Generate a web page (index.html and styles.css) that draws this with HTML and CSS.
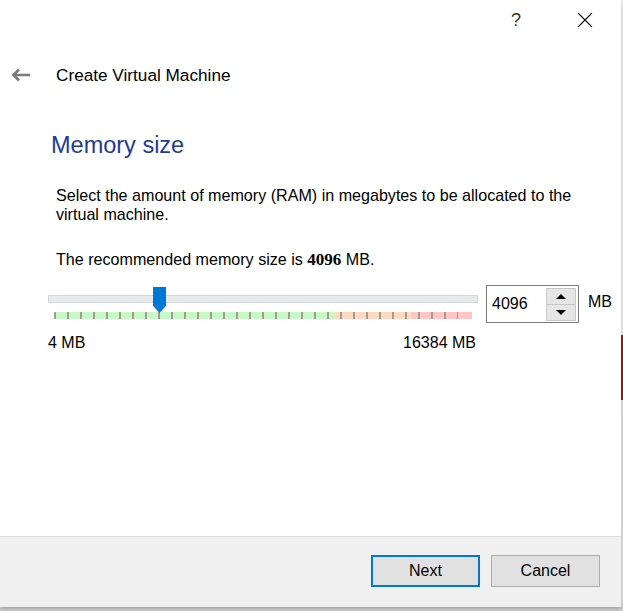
FILE: index.html
```html
<!DOCTYPE html>
<html lang="en">
<head>
    <meta charset="UTF-8">
    <title>Create Virtual Machine</title>
    <link rel="stylesheet" href="styles.css">
</head>
<body>
    <div class="window">
        <div class="titlebar">
            <span class="help">?</span>
            <span class="close">
                <svg width="16" height="16" viewBox="0 0 16 16"><path d="M1 1 L15 15 M15 1 L1 15" stroke="#111" stroke-width="1.1" fill="none"/></svg>
            </span>
        </div>

        <div class="header">
            <svg class="back" width="20" height="14" viewBox="0 0 20 14"><path d="M8 1.5 L2.5 7 L8 12.5 M2.5 7 H19" stroke="#7b7b7b" stroke-width="2.6" fill="none"/></svg>
            <span class="title">Create Virtual Machine</span>
        </div>

        <div class="content">
            <h1 class="page-heading">Memory size</h1>
            <p class="desc">Select the amount of memory (RAM) in megabytes to be allocated to the virtual machine.</p>
            <p class="desc rec">The recommended memory size is <b>4096</b> MB.</p>

            <div class="memory-row">
                <div class="slider">
                    <div class="track"></div>
                    <div class="ticks"></div>
                    <div class="scale-labels">
                        <span>4 MB</span>
                        <span>16384 MB</span>
                    </div>
                    <div class="thumb"></div>
                </div>
                <div class="spinbox">
                    <span class="spin-value">4096</span>
                    <div class="spin-buttons">
                        <div class="spin-btn"><span class="arrow-up"></span></div>
                        <div class="spin-btn"><span class="arrow-down"></span></div>
                    </div>
                </div>
                <span class="unit">MB</span>
            </div>
        </div>

        <div class="footer">
            <button class="btn btn-primary">Next</button>
            <button class="btn">Cancel</button>
        </div>
    </div>
</body>
</html>
```

FILE: styles.css
```css
/* Wizard dialog */
body {
    margin: 0;
    height: 611px;
    overflow: hidden;
    font-family: "Liberation Sans", Arial, sans-serif;
    color: #000;
    background: linear-gradient(to bottom, #f2f2f2 0, #f2f2f2 335px, #8e1f1a 335px, #8e1f1a 400px, #e9e4da 400px, #e9e4da 604px, #d4d4d4 604px);
}

.window {
    width: 621px;
    height: 607px;
    background-color: #fff;
    display: flex;
    flex-direction: column;
    box-shadow: 0 2px 4px rgba(0, 0, 0, 0.25);
}

.titlebar {
    height: 40px;
    display: flex;
    align-items: center;
    justify-content: flex-end;
    padding-right: 28px;
    gap: 56px;
}

.help {
    font-size: 18px;
    color: #333;
}

.close svg {
    display: block;
}

.header {
    height: 30px;
    margin-top: 20px;
    display: flex;
    align-items: center;
    padding-left: 11px;
}

.header .back {
    margin-right: 25px;
}

.title {
    font-size: 17.2px;
}

.content {
    flex: 1;
    padding-left: 48px;
}

.page-heading {
    margin: 40px 0 0 3px;
    font-size: 23.5px;
    line-height: 30px;
    font-weight: normal;
    color: #1d3c97;
}

.desc {
    margin: 26px 0 0 8px;
    font-size: 16.1px;
    line-height: 19px;
    width: 530px;
}

.rec b {
    font-family: "Liberation Serif", "Times New Roman", serif;
    font-size: 17px;
}

.memory-row {
    margin-top: 16px;
    display: flex;
    align-items: flex-start;
}

.slider {
    position: relative;
    width: 430px;
}

.track {
    margin-top: 10px;
    height: 6px;
    background-color: #e7eaea;
    border: 1px solid #d6d6d6;
}

.ticks {
    margin: 9px 0 0 6px;
    width: 418px;
    height: 7px;
    background:
        repeating-linear-gradient(to right, #a29c92 0, #a29c92 2px, transparent 2px, transparent 13px) 0 0 / 404px 100% no-repeat,
        linear-gradient(to right, #c6f9c6 0, #c6f9c6 280px, #f3e7b2 280px, #f3e7b2 282px, #ffd9c2 282px, #ffd9c2 357px, #ffc6c6 357px);
}

.scale-labels {
    margin-top: 14px;
    display: flex;
    justify-content: space-between;
    padding-right: 2px;
    font-size: 16px;
    line-height: 19px;
}

.thumb {
    position: absolute;
    top: 2px;
    left: 105px;
    width: 13px;
    height: 26px;
    background-color: #0078d7;
    clip-path: polygon(0 0, 100% 0, 100% 72%, 50% 100%, 0 72%);
}

.spinbox {
    margin-left: 8px;
    width: 89px;
    height: 36px;
    border: 1px solid #7a7a7a;
    display: flex;
    align-items: center;
    justify-content: space-between;
    padding-right: 2px;
}

.spin-value {
    padding-left: 5px;
    font-size: 16px;
}

.spin-buttons {
    width: 30px;
    display: flex;
    flex-direction: column;
}

.spin-btn {
    height: 15px;
    background-color: #e6e6e6;
    border: 1px solid #c8c8c8;
    display: flex;
    align-items: center;
    justify-content: center;
}

.spin-btn + .spin-btn {
    border-top: none;
}

.arrow-up,
.arrow-down {
    width: 0;
    height: 0;
    border-left: 5px solid transparent;
    border-right: 5px solid transparent;
}

.arrow-up {
    border-bottom: 5px solid #000;
}

.arrow-down {
    border-top: 5px solid #000;
}

.unit {
    margin: 8px 0 0 9px;
    font-size: 16px;
}

.footer {
    height: 70px;
    background-color: #f0f0f0;
    border-top: 1px solid #dfdfdf;
    display: flex;
    justify-content: flex-end;
    align-items: flex-start;
    gap: 11px;
    padding-right: 21px;
}

.btn {
    margin-top: 18px;
    width: 109px;
    height: 32px;
    font-family: "Liberation Sans", Arial, sans-serif;
    font-size: 16px;
    color: #000;
    background-color: #e1e1e1;
    border: 1px solid #adadad;
    padding: 0;
}

.btn-primary {
    border: 2px solid #0078d7;
}
```
